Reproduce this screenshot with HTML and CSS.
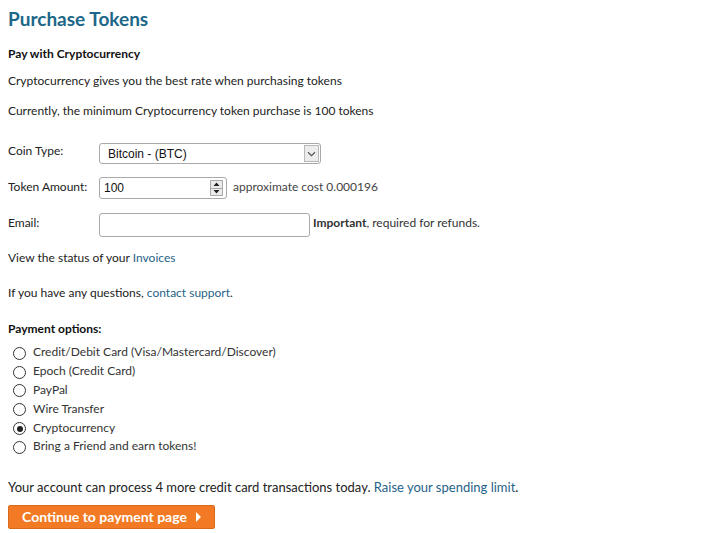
FILE: index.html
```html
<!DOCTYPE html>
<html>
<head>
<meta charset="utf-8">
<link rel="stylesheet" href="styles.css">
</head>
<body>
<div class="page">
  <h1 class="title">Purchase Tokens</h1>
  <p class="sub">Pay with Cryptocurrency</p>
  <p class="line l1">Cryptocurrency gives you the best rate when purchasing tokens</p>
  <p class="line l2">Currently, the minimum Cryptocurrency token purchase is 100 tokens</p>

  <div class="form">
    <div class="row r-coin">
      <span class="label">Coin Type:</span>
      <div class="select">
        <span class="select-text">Bitcoin - (BTC)</span>
        <span class="select-btn">
          <svg width="9" height="6" viewBox="0 0 9 6"><path d="M1 1.2 L4.5 4.6 L8 1.2" fill="none" stroke="#555" stroke-width="1.2"/></svg>
        </span>
      </div>
    </div>
    <div class="row r-amount">
      <span class="label">Token Amount:</span>
      <div class="number">
        <span class="number-text">100</span>
        <span class="spin">
          <span class="spin-up"><svg width="7" height="4" viewBox="0 0 7 4"><path d="M0.5 4 L3.5 0.5 L6.5 4 Z" fill="#222"/></svg></span>
          <span class="spin-down"><svg width="7" height="4" viewBox="0 0 7 4"><path d="M0.5 0 L3.5 3.5 L6.5 0 Z" fill="#222"/></svg></span>
        </span>
      </div>
      <span class="hint">approximate cost 0.000196</span>
    </div>
    <div class="row r-email">
      <span class="label">Email:</span>
      <div class="email"></div>
      <span class="hint dark"><b>Important</b>, required for refunds.</span>
    </div>
  </div>

  <p class="line l3">View the status of your <a href="#">Invoices</a></p>
  <p class="line l4">If you have any questions, <a href="#">contact support</a>.</p>

  <p class="sub opts">Payment options:</p>
  <ul class="radios">
    <li><span class="radio"></span>Credit/Debit Card (Visa/Mastercard/Discover)</li>
    <li><span class="radio"></span>Epoch (Credit Card)</li>
    <li><span class="radio"></span>PayPal</li>
    <li><span class="radio"></span>Wire Transfer</li>
    <li><span class="radio on"></span>Cryptocurrency</li>
    <li><span class="radio"></span>Bring a Friend and earn tokens!</li>
  </ul>

  <p class="line l5">Your account can process 4 more credit card transactions today. <a href="#">Raise your spending limit</a>.</p>
  <div class="btn">Continue to payment page <span class="tri"></span></div>
</div>
</body>
</html>
```
FILE: styles.css
```css
html, body {
  margin: 0;
  padding: 0;
  background: #fff;
}
body {
  font-family: Lato, "Open Sans", sans-serif;
  font-size: 12px;
  color: #222;
}
.page {
  padding: 7px 8px 0 8px;
}
.title {
  margin: 0;
  font-size: 19px;
  line-height: 24px;
  font-weight: bold;
  color: #1d6788;
}
.sub {
  margin: 15px 0 0 0;
  font-weight: bold;
  line-height: 16px;
  color: #111;
}
.line {
  margin: 0;
  line-height: 16px;
}
.l1 { margin-top: 11px; }
.l2 { margin-top: 14px; }
.l3 { margin-top: 13px; }
.l4 { margin-top: 19px; }
.l5 { margin-top: 23px; font-size: 13px; }
a {
  color: #1f6388;
  text-decoration: none;
}
.form {
  margin-top: 24px;
  display: flex;
  flex-direction: column;
}
.row {
  display: flex;
  align-items: flex-start;
  line-height: 16px;
}
.r-amount { margin-top: 13px; }
.r-email { margin-top: 14px; }
.label {
  width: 91px;
  flex: none;
}
.r-amount .label, .r-email .label, .hint {
  padding-top: 2px;
}
.select {
  width: 220px;
  height: 19px;
  border: 1px solid #a9a9a9;
  border-radius: 3px;
  display: flex;
  align-items: center;
  justify-content: space-between;
  box-sizing: content-box;
}
.select-text {
  font-family: "Liberation Sans", Arial, sans-serif;
  font-size: 12px;
  padding-left: 8px;
  color: #111;
}
.select-btn {
  width: 15px;
  height: 17px;
  margin-right: 1px;
  border: 1px solid #b9b9b9;
  background: #ececec;
  display: flex;
  align-items: center;
  justify-content: center;
  box-sizing: border-box;
}
.number {
  width: 126px;
  height: 20px;
  border: 1px solid #a9a9a9;
  border-radius: 3px;
  display: flex;
  align-items: center;
  justify-content: space-between;
}
.number-text {
  font-family: "Liberation Sans", Arial, sans-serif;
  font-size: 12px;
  padding-left: 4px;
  color: #111;
}
.spin {
  width: 13px;
  height: 16px;
  margin-right: 3px;
  border: 1px solid #a9a9a9;
  background: #ececec;
  display: flex;
  flex-direction: column;
  box-sizing: border-box;
}
.spin-up, .spin-down {
  flex: 1;
  display: flex;
  align-items: center;
  justify-content: center;
}
.spin-up { border-bottom: 1px solid #a9a9a9; }
.hint {
  margin-left: 6px;
  color: #444;
}
.hint.dark { margin-left: 3px; color: #333; }
.hint b { color: #333; }
.email {
  width: 209px;
  height: 22px;
  border: 1px solid #a9a9a9;
  border-radius: 3px;
}
.opts { margin-top: 20px; }
.radios {
  list-style: none;
  margin: 6px 0 0 0;
  padding: 0;
}
.radios li {
  display: flex;
  align-items: center;
  height: 18.8px;
  line-height: 16px;
  color: #333;
}
.radio {
  width: 11px;
  height: 11px;
  border: 1px solid #333;
  border-radius: 50%;
  margin: 2px 7px 0 5px;
  flex: none;
  display: flex;
  align-items: center;
  justify-content: center;
  background: #fff;
}
.radio.on::after {
  content: "";
  width: 6px;
  height: 6px;
  border-radius: 50%;
  background: #222;
}
.btn {
  margin-top: 10px;
  width: 205px;
  height: 22px;
  box-sizing: content-box;
  background: #f37a24;
  border: 1px solid #d96a1c;
  border-radius: 2px;
  color: #fff;
  font-size: 14px;
  font-weight: bold;
  display: flex;
  align-items: center;
  padding-left: 0;
  justify-content: center;
  gap: 9px;
}
.tri {
  width: 0;
  height: 0;
  border-left: 5px solid #fff;
  border-top: 5px solid transparent;
  border-bottom: 5px solid transparent;
}
```
